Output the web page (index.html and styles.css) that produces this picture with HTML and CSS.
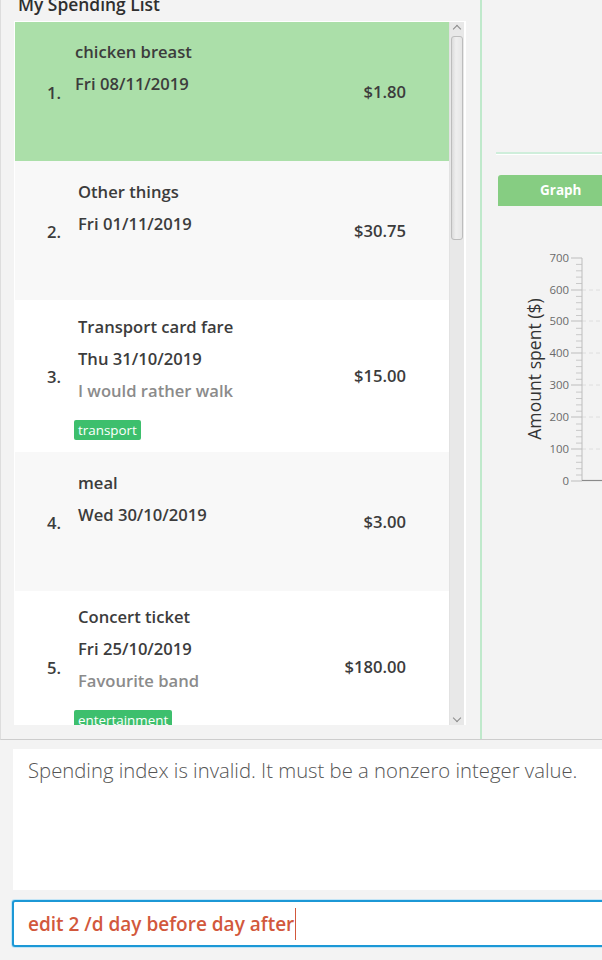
FILE: index.html
```html
<!DOCTYPE html>
<html>
<head>
<meta charset="utf-8">
<link rel="stylesheet" href="styles.css">
</head>
<body>
<div class="app">
  <div class="top">
    <div class="left">
      <div class="title">My Spending List</div>
      <div class="list">
        <div class="items">
          <div class="item selected">
            <div class="idx">1.</div>
            <div class="info first">
              <div class="line">chicken breast</div>
              <div class="line">Fri 08/11/2019</div>
            </div>
            <div class="amt">$1.80</div>
          </div>
          <div class="item alt">
            <div class="idx">2.</div>
            <div class="info">
              <div class="line">Other things</div>
              <div class="line">Fri 01/11/2019</div>
            </div>
            <div class="amt">$30.75</div>
          </div>
          <div class="item full">
            <div class="idx">3.</div>
            <div class="info">
              <div class="line">Transport card fare</div>
              <div class="line">Thu 31/10/2019</div>
              <div class="line desc">I would rather walk</div>
              <div class="tags"><span class="tag">transport</span></div>
            </div>
            <div class="amt">$15.00</div>
          </div>
          <div class="item alt">
            <div class="idx">4.</div>
            <div class="info">
              <div class="line">meal</div>
              <div class="line">Wed 30/10/2019</div>
            </div>
            <div class="amt">$3.00</div>
          </div>
          <div class="item full last">
            <div class="idx">5.</div>
            <div class="info">
              <div class="line">Concert ticket</div>
              <div class="line">Fri 25/10/2019</div>
              <div class="line desc">Favourite band</div>
              <div class="tags"><span class="tag">entertainment</span></div>
            </div>
            <div class="amt">$180.00</div>
          </div>
        </div>
        <div class="scrollbar">
          <div class="arrow up"></div>
          <div class="thumb"></div>
          <div class="spacer"></div>
          <div class="arrow down"></div>
        </div>
      </div>
    </div>
    <div class="right">
      <div class="right-top"></div>
      <div class="rule"></div>
      <div class="tab">Graph</div>
      <svg class="chart" width="120" height="532" viewBox="0 0 120 532">
        <g class="grid">
          <line x1="100" y1="84" x2="120" y2="84"/>
          <line x1="100" y1="115" x2="120" y2="115"/>
          <line x1="100" y1="147" x2="120" y2="147"/>
          <line x1="100" y1="179" x2="120" y2="179"/>
          <line x1="100" y1="211" x2="120" y2="211"/>
          <line x1="100" y1="243" x2="120" y2="243"/>
        </g>
        <g class="minor">
          <line x1="94" y1="58.4" x2="100" y2="58.4"/><line x1="94" y1="64.8" x2="100" y2="64.8"/><line x1="94" y1="71.1" x2="100" y2="71.1"/><line x1="94" y1="77.5" x2="100" y2="77.5"/>
          <line x1="94" y1="90.4" x2="100" y2="90.4"/><line x1="94" y1="96.7" x2="100" y2="96.7"/><line x1="94" y1="103.1" x2="100" y2="103.1"/><line x1="94" y1="109.5" x2="100" y2="109.5"/>
          <line x1="94" y1="122.3" x2="100" y2="122.3"/><line x1="94" y1="128.7" x2="100" y2="128.7"/><line x1="94" y1="135" x2="100" y2="135"/><line x1="94" y1="141.4" x2="100" y2="141.4"/>
          <line x1="94" y1="154.2" x2="100" y2="154.2"/><line x1="94" y1="160.6" x2="100" y2="160.6"/><line x1="94" y1="167" x2="100" y2="167"/><line x1="94" y1="173.3" x2="100" y2="173.3"/>
          <line x1="94" y1="186.1" x2="100" y2="186.1"/><line x1="94" y1="192.5" x2="100" y2="192.5"/><line x1="94" y1="198.9" x2="100" y2="198.9"/><line x1="94" y1="205.2" x2="100" y2="205.2"/>
          <line x1="94" y1="218" x2="100" y2="218"/><line x1="94" y1="224.4" x2="100" y2="224.4"/><line x1="94" y1="230.8" x2="100" y2="230.8"/><line x1="94" y1="237.1" x2="100" y2="237.1"/>
          <line x1="94" y1="249.9" x2="100" y2="249.9"/><line x1="94" y1="256.3" x2="100" y2="256.3"/><line x1="94" y1="262.7" x2="100" y2="262.7"/><line x1="94" y1="269" x2="100" y2="269"/>
        </g>
        <g class="major">
          <line x1="89" y1="52" x2="100" y2="52"/>
          <line x1="89" y1="84" x2="100" y2="84"/>
          <line x1="89" y1="115" x2="100" y2="115"/>
          <line x1="89" y1="147" x2="100" y2="147"/>
          <line x1="89" y1="179" x2="100" y2="179"/>
          <line x1="89" y1="211" x2="100" y2="211"/>
          <line x1="89" y1="243" x2="100" y2="243"/>
          <line x1="89" y1="275" x2="100" y2="275"/>
          <line x1="100" y1="52" x2="100" y2="275"/>
        </g>
        <line class="xaxis" x1="100" y1="274.5" x2="120" y2="274.5"/>
        <g class="ticklabels">
          <text x="87" y="56">700</text>
          <text x="87" y="88">600</text>
          <text x="87" y="119">500</text>
          <text x="87" y="151">400</text>
          <text x="87" y="183">300</text>
          <text x="87" y="215">200</text>
          <text x="87" y="247">100</text>
          <text x="87" y="279">0</text>
        </g>
        <text class="axis-title" x="0" y="0" transform="translate(59 163) rotate(-90)">Amount spent ($)</text>
      </svg>
    </div>
  </div>
  <div class="bottom">
    <div class="result">Spending index is invalid. It must be a nonzero integer value.</div>
    <div class="command"><span class="cmd-text">edit 2 /d day before day after</span><span class="caret"></span></div>
  </div>
</div>
</body>
</html>
```

FILE: styles.css
```css
* { box-sizing: border-box; }
html, body {
  margin: 0;
  padding: 0;
  background: #f3f3f3;
}
body {
  width: 602px;
  height: 960px;
  overflow: hidden;
  font-family: "Open Sans", "Noto Sans", sans-serif;
  color: #3c3c3c;
}
.app {
  width: 602px;
  height: 960px;
  display: flex;
  flex-direction: column;
}
.top {
  display: flex;
  height: 740px;
  border-bottom: 1px solid #cdcdcd;
  border-left: 1px solid #dddddd;
  flex-shrink: 0;
}
.left {
  width: 479px;
  padding-left: 13px;
  display: flex;
  flex-direction: column;
}
.title {
  height: 21px;
  font-size: 17.4px;
  line-height: 8px;
  font-weight: 600;
  color: #2f2f2f;
  padding-left: 4px;
  white-space: nowrap;
}
.list {
  width: 452px;
  height: 704px;
  background: #ffffff;
  padding: 1px 2px 0 1px;
  display: flex;
}
.items {
  width: 434px;
  overflow: hidden;
  height: 703px;
}
.item {
  display: flex;
  align-items: flex-start;
  min-height: 139px;
  padding-left: 32px;
  padding-right: 43px;
  font-size: 16.6px;
  font-weight: 600;
}
.item.selected { background: #abdfa9; }
.item.alt { background: #f8f8f8; }
.item.full { min-height: 152px; }
.info {
  flex: 1;
  display: flex;
  flex-direction: column;
  padding-top: 15px;
  margin-left: 1px;
}
.info.first { margin-left: -2px; padding-top: 14px; }
.item.full .info { padding-top: 11px; }
.item.last .info { padding-top: 10px; }
.idx {
  width: 30px;
  align-self: center;
  line-height: 20px;
  position: relative;
  top: 1px;
}
.line {
  line-height: 32px;
  height: 32px;
  white-space: nowrap;
}
.desc {
  color: #8b8b8b;
}
.tags {
  margin-top: 13px;
  margin-left: -4px;
  display: flex;
}
.tag {
  display: inline-block;
  height: 20px;
  line-height: 20px;
  padding: 0 4px;
  background: #3dbf6d;
  color: #ffffff;
  font-size: 13.4px;
  font-weight: 400;
  border-radius: 2px;
}
.amt {
  align-self: center;
  line-height: 20px;
  text-align: right;
  white-space: nowrap;
}
.scrollbar {
  width: 15px;
  height: 703px;
  background: #e8e8e8;
  border-left: 1px solid #e2e2e2;
  display: flex;
  flex-direction: column;
  align-items: center;
}
.arrow {
  width: 15px;
  height: 12px;
  position: relative;
}
.arrow::after {
  content: "";
  position: absolute;
  left: 4px;
  width: 5px;
  height: 5px;
  border-left: 1px solid #8a8a8a;
  border-top: 1px solid #8a8a8a;
}
.arrow.up::after { top: 4px; transform: rotate(45deg); }
.arrow.down::after { top: 2px; transform: rotate(225deg); }
.thumb {
  width: 12px;
  height: 204px;
  border: 1px solid #bdbdbd;
  border-radius: 3px;
  background: linear-gradient(to right, #dcdcdc, #efefef 40%, #e6e6e6);
  margin-top: 2px;
}
.spacer { flex: 1; }
.right {
  flex: 1;
  border-left: 2px solid #bfe9cb;
  display: flex;
  flex-direction: column;
}
.right-top { height: 152px; }
.rule {
  margin-left: 14px;
  height: 3px;
  border-top: 2px solid #cfeedb;
  border-bottom: 1px solid #ffffff;
}
.tab {
  margin-top: 20px;
  margin-left: 16px;
  height: 31px;
  background: #86cd82;
  border-radius: 3px 0 0 0;
  color: #ffffff;
  font-size: 13.5px;
  font-weight: 700;
  line-height: 31px;
  padding-left: 42px;
}
.chart { display: block; }
.grid line { stroke: #dedede; stroke-width: 1; stroke-dasharray: 4 3; }
.minor line { stroke: #c9c9c9; stroke-width: 1; }
.major line { stroke: #bdbdbd; stroke-width: 1; }
.xaxis { stroke: #8a8a8a; stroke-width: 1.2; }
.ticklabels text {
  font-family: "Open Sans", sans-serif;
  font-size: 11.4px;
  fill: #6a6a6a;
  text-anchor: end;
}
.axis-title {
  font-family: "Open Sans", sans-serif;
  font-size: 17.6px;
  fill: #333333;
  text-anchor: middle;
}
.bottom {
  display: flex;
  flex-direction: column;
  padding-left: 12px;
}
.result {
  margin-top: 9px;
  margin-left: 1px;
  height: 141px;
  background: #ffffff;
  padding: 7px 0 0 15px;
  font-size: 20.3px;
  font-weight: 300;
  line-height: 28px;
  color: #555555;
  white-space: nowrap;
  overflow: hidden;
}
.command {
  margin-top: 10px;
  height: 47px;
  background: #ffffff;
  border: 2px solid #1c98d6;
  border-right: none;
  border-radius: 3px 0 0 3px;
  box-shadow: 0 0 0 1px #c3e5f6;
  padding-left: 14px;
  display: flex;
  align-items: center;
  font-size: 19px;
  font-weight: 600;
  color: #d2583c;
}
.cmd-text { white-space: nowrap; }
.caret {
  width: 1px;
  height: 32px;
  background: #d2583c;
  margin-left: 1px;
}
```
